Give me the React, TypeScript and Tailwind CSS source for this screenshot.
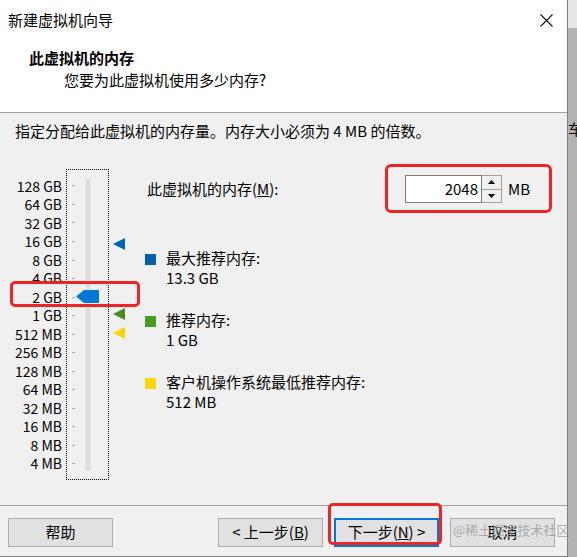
const font = { fontFamily: '"Noto Sans CJK SC", "Noto Sans", sans-serif' }

const sizes = ['128 GB', '64 GB', '32 GB', '16 GB', '8 GB', '4 GB', '2 GB', '1 GB', '512 MB', '256 MB', '128 MB', '64 MB', '32 MB', '16 MB', '8 MB', '4 MB']

function Marker({ color, top }: { color: string; top: string }) {
  return (
    <svg className={`absolute left-[113px] ${top}`} width="12" height="12" viewBox="0 0 12 12">
      <polygon points="0,6 12,0 12,12" fill={color} />
    </svg>
  )
}

function Legend({ color, title, value }: { color: string; title: string; value: string }) {
  return (
    <div className="flex items-start">
      <div className={`w-[11px] h-[11px] mt-[6px] ${color}`} />
      <div className="ml-[10px] leading-[20px]">
        <div>{title}</div>
        <div>{value}</div>
      </div>
    </div>
  )
}

export default function App() {
  return (
    <div style={font} className="relative w-[577px] h-[557px] flex overflow-hidden text-[15px] text-black bg-[#f0f0f0]">
      <div className="w-[568px] h-[557px] flex flex-col border-r border-b border-[#7f7f7f]">
        {/* header */}
        <div className="h-[113px] bg-white border-b border-[#a0a0a0] flex flex-col">
          <div className="h-[40px] flex items-center justify-between pl-[8px] pr-[14px]">
            <span>新建虚拟机向导</span>
            <svg width="13" height="13" viewBox="0 0 13 13">
              <path d="M0.5 0.5 L12.5 12.5 M12.5 0.5 L0.5 12.5" stroke="#111" strokeWidth="1.1" />
            </svg>
          </div>
          <div className="pl-[29px] font-bold leading-[20px] mt-[8px]">此虚拟机的内存</div>
          <div className="pl-[64px] leading-[20px] mt-[2px]">您要为此虚拟机使用多少内存?</div>
        </div>

        {/* body */}
        <div className="flex-1 flex flex-col pt-[8px]">
          <p className="pl-[15px] leading-[20px]">指定分配给此虚拟机的内存量。内存大小必须为 4 MB 的倍数。</p>
          <div className="mt-[28px] flex">
            <div className="relative w-[145px] flex items-start">
              <div className="w-[62px] pt-[7.7px] flex flex-col items-end text-[14px]">
                {sizes.map((s) => (
                  <div key={s} className="h-[18.53px] leading-[18px] whitespace-nowrap">{s}</div>
                ))}
              </div>
              <div className="relative ml-[4px] w-[43px] h-[311px] border border-dotted border-black">
                <div className="pt-[6.7px] flex flex-col">
                  {sizes.map((s) => (
                    <div key={s} className="h-[18.53px] flex items-center pl-[5px]">
                      <div className="w-[3px] h-px bg-[#a8a8a8]" />
                    </div>
                  ))}
                </div>
                <div className="absolute left-[19px] top-[10px] w-[4px] h-[290px] bg-[#e3e3e3] border border-[#d2d2d2]" />
                <svg className="absolute left-[9px] top-[120px]" width="23" height="13" viewBox="0 0 23 13">
                  <polygon points="0,6.5 8,0 23,0 23,13 8,13" fill="#0078d7" />
                </svg>
              </div>
              <Marker color="#0063b1" top="top-[69px]" />
              <Marker color="#4a8c22" top="top-[139px]" />
              <Marker color="#f5d800" top="top-[158px]" />
            </div>

            <div className="flex-1 flex flex-col">
              <div className="mt-[6px] h-[28px] flex items-center">
                <div className="w-[260px] pl-[2px]">
                  此虚拟机的内存(<span className="underline">M</span>):
                </div>
                <div className="w-[77px] h-[28px] bg-white border border-[#7a7a7a] flex items-center justify-end pr-[3px]">2048</div>
                <div className="w-[20px] h-[28px] flex flex-col border border-l-0 border-[#a0a0a0] bg-[#f0f0f0]">
                  <div className="flex-1 flex items-center justify-center border-b border-[#a0a0a0]">
                    <svg width="7" height="4" viewBox="0 0 7 4"><polygon points="3.5,0 7,4 0,4" fill="#000" /></svg>
                  </div>
                  <div className="flex-1 flex items-center justify-center">
                    <svg width="7" height="4" viewBox="0 0 7 4"><polygon points="0,0 7,0 3.5,4" fill="#000" /></svg>
                  </div>
                </div>
                <span className="ml-[6px]">MB</span>
              </div>
              <div className="mt-[45px] flex flex-col gap-[22px]">
                <Legend color="bg-[#0060a9]" title="最大推荐内存:" value="13.3 GB" />
                <Legend color="bg-[#4a9a1f]" title="推荐内存:" value="1 GB" />
                <Legend color="bg-[#ffd700]" title="客户机操作系统最低推荐内存:" value="512 MB" />
              </div>
            </div>
          </div>
        </div>

        {/* footer */}
        <div className="h-[51px] border-t border-[#a0a0a0] flex items-start pt-[12px] pl-[8px] text-[15px]">
          <button className="w-[105px] h-[29px] bg-[#e1e1e1] border border-[#adadad]">帮助</button>
          <button className="ml-[105px] w-[105px] h-[29px] bg-[#e1e1e1] border border-[#adadad]">
            &lt; 上一步(<span className="underline">B</span>)
          </button>
          <button className="ml-[11px] w-[105px] h-[29px] bg-[#e1e1e1] border-2 border-[#0078d7]">
            下一步(<span className="underline">N</span>) &gt;
          </button>
          <button className="ml-[11px] w-[105px] h-[29px] bg-[#e1e1e1] border border-[#adadad]">取消</button>
        </div>
      </div>

      {/* background window strip */}
      <div className="flex-1 flex flex-col overflow-hidden bg-[#b2b2b2]">
        <div className="h-[28px] bg-[#e6e6e6]" />
        <div className="mt-[91px] leading-[20px] whitespace-nowrap">车</div>
      </div>

      {/* annotations */}
      <div className="absolute left-[10px] top-[281px] w-[130px] h-[26px] border-[3px] border-[#f02424] rounded-[5px]" />
      <div className="absolute left-[385px] top-[164px] w-[167px] h-[49px] border-[3px] border-[#f02424] rounded-[6px]" />
      <div className="absolute left-[328px] top-[503px] w-[114px] h-[42px] border-[3px] border-[#f02424] rounded-[5px]" />
      <div className="absolute left-[453px] top-[520px] text-[13px] leading-[20px] text-[#9a9a9a]/80 whitespace-nowrap">@稀土掘金技术社区</div>
    </div>
  )
}
